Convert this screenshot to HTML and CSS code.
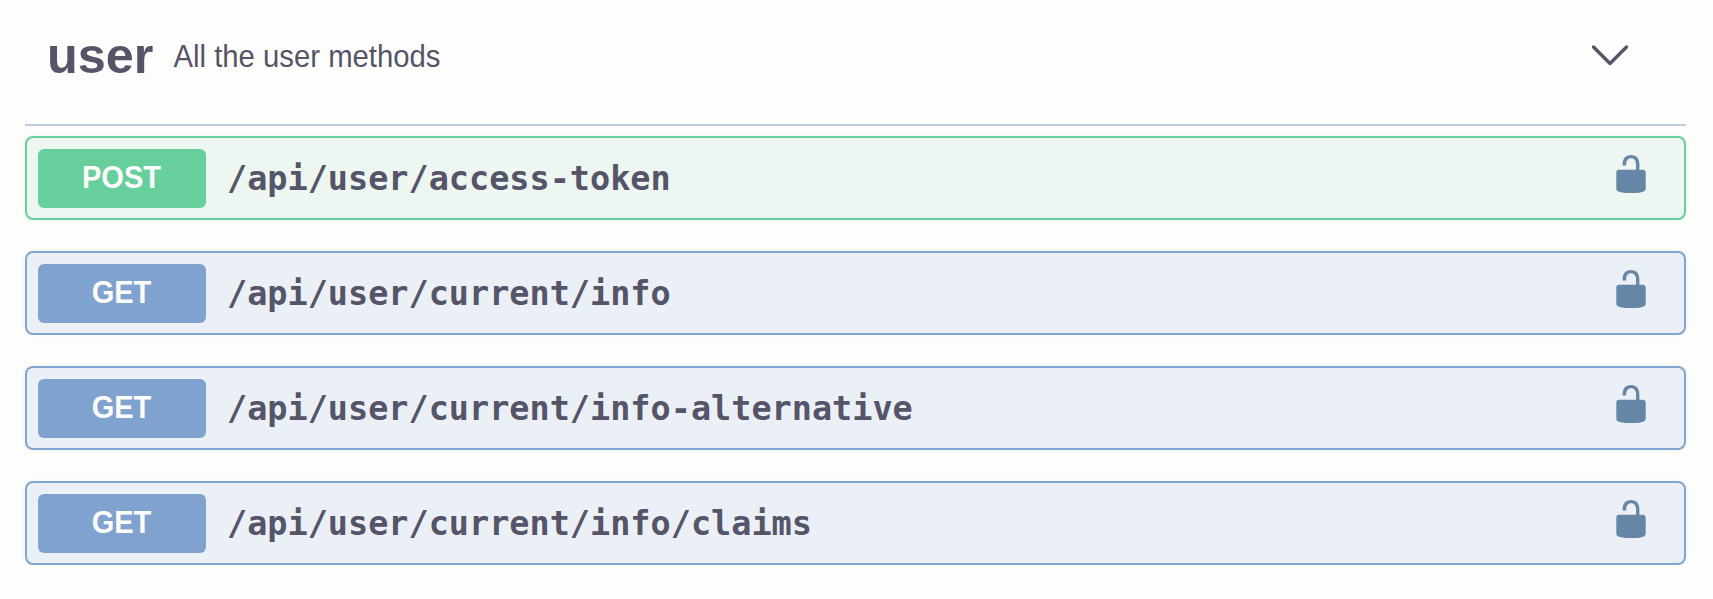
FILE: index.html
```html
<!DOCTYPE html>
<html lang="en">
<head>
<meta charset="utf-8">
<title>user</title>
<link rel="stylesheet" href="styles.css">
</head>
<body>
<svg class="defs" width="0" height="0" aria-hidden="true">
  <symbol id="unlocked" viewBox="0 0 20 20">
    <path d="M15.8 8H14V5.6C14 2.703 12.665 1 10 1 7.334 1 6 2.703 6 5.6V6h1.7v-.801C7.700 3.354 8.797 2.500 10 2.500c1.203 0 2.400.854 2.400 2.699V8H4c-.553 0-1 .646-1 1.199V17c0 .549.428 1.139.951 1.307l1.197.387C5.672 18.861 6.550 19 7.100 19h5.800c.549 0 1.428-.139 1.951-.307l1.196-.387c.524-.167.953-.757.953-1.306V9.199C17 8.646 16.352 8 15.800 8z"/>
  </symbol>
</svg>
<main class="section">
  <header class="tag">
    <h1 class="tag-name">user</h1>
    <p class="tag-description">All the user methods</p>
    <svg class="chevron" viewBox="0 0 40 24"><path d="M3.500 3 20 19.500 36.500 3"/></svg>
  </header>
  <div class="operations">
    <div class="operation post">
      <span class="method"><span class="method-label">POST</span></span>
      <span class="path">/api/user/access-token</span>
      <svg class="lock"><use href="#unlocked"/></svg>
    </div>
    <div class="operation get">
      <span class="method"><span class="method-label">GET</span></span>
      <span class="path">/api/user/current/info</span>
      <svg class="lock"><use href="#unlocked"/></svg>
    </div>
    <div class="operation get">
      <span class="method"><span class="method-label">GET</span></span>
      <span class="path">/api/user/current/info-alternative</span>
      <svg class="lock"><use href="#unlocked"/></svg>
    </div>
    <div class="operation get">
      <span class="method"><span class="method-label">GET</span></span>
      <span class="path">/api/user/current/info/claims</span>
      <svg class="lock"><use href="#unlocked"/></svg>
    </div>
  </div>
</main>
</body>
</html>
```
FILE: styles.css
```css
* { box-sizing: border-box; }

body {
  margin: 0;
  background: #fdfefc;
  color: #555468;
  font-family: "Liberation Sans", Arial, sans-serif;
}

.defs { display: block; }

.section { padding: 0 27px 0 25px; }

.tag {
  display: flex;
  align-items: center;
  height: 126px;
  padding: 0 56px 12px 22px;
  border-bottom: 2px solid #bccfe0;
}

.tag-name {
  margin: 0;
  font-size: 50.4px;
  line-height: 60px;
}

.tag-description {
  flex: 1;
  margin: 0;
  padding-left: 20px;
  font-size: 29.3px;
  line-height: 40px;
  transform: scaleY(1.07);
}

.chevron {
  width: 40px;
  height: 24px;
  fill: none;
  stroke: #555468;
  stroke-width: 3.4;
  stroke-linecap: round;
  stroke-linejoin: round;
}

.operations {
  display: grid;
  gap: 31px;
  padding-top: 10px;
}

.operation {
  display: flex;
  align-items: center;
  height: 84px;
  padding: 0 32px 0 10.500px;
  border: 2.400px solid;
  border-radius: 8px;
  box-shadow: 0 0 5px rgba(0, 0, 0, 0.06);
}

.post { border-color: #66cf9c; background: #edf6f0; }
.get { border-color: #80a5cf; background: #ebf0f7; }

.method {
  display: flex;
  align-items: center;
  justify-content: center;
  width: 168px;
  height: 59px;
  padding-bottom: 2px;
  border-radius: 6px;
  color: #fdfefc;
  font-size: 29px;
  font-weight: bold;
}

.method-label { transform: scaleY(1.07); }

.post .method { background: #66cf9c; }
.get .method { background: #80a2ce; }

.path {
  flex: 1;
  padding: 1px 0 0 21.500px;
  font-family: "DejaVu Sans Mono", monospace;
  font-size: 33.500px;
  font-weight: bold;
}

.lock {
  width: 42px;
  height: 42px;
  margin-bottom: 8px;
  fill: #6587a5;
}
```
